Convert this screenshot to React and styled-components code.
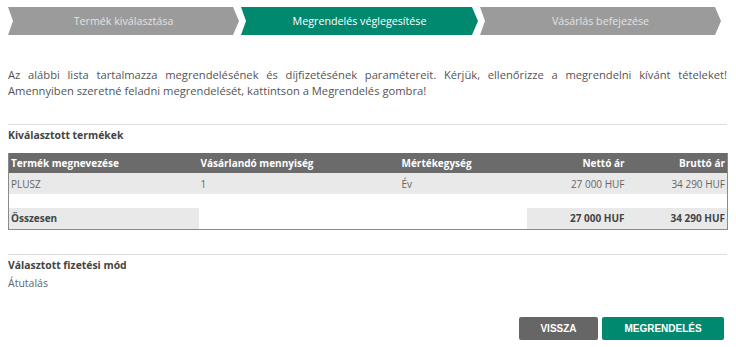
import React from "react";
import styled, { createGlobalStyle } from "styled-components";

const Global = createGlobalStyle`
  html, body { margin: 0; padding: 0; background: #fff; }
  body { font-family: "Open Sans", "Liberation Sans", sans-serif; color: #555; }
`;

const Page = styled.div`
  width: 719px;
  padding: 7px 0 0 8px;
`;

const Steps = styled.div`
  display: flex;
  gap: 2px;
  height: 28px;
`;

const Step = styled.div`
  flex: 0 0 ${(p) => p.$w}px;
  height: 28px;
  display: flex;
  align-items: center;
  justify-content: center;
  font-size: 10.7px;
  background: ${(p) => (p.$active ? "#00896f" : "#9b9b9b")};
  color: ${(p) => (p.$active ? "#ffffff" : "#e2e2e2")};
  clip-path: polygon(0 0, calc(100% - 6px) 0, 100% 50%, calc(100% - 6px) 100%, 0 100%, 5px 50%);
`;

const Intro = styled.p`
  margin: 32px 0 0;
  font-size: 11.2px;
  line-height: 16px;
  text-align: justify;
  color: #555;
`;

const Rule = styled.hr`
  border: 0;
  border-top: 1px solid #dddddd;
  margin: ${(p) => p.$mt}px 0 0;
`;

const SectionTitle = styled.div`
  font-weight: 700;
  font-size: 10.4px;
  line-height: 16px;
  color: #444;
  margin-top: 2px;
`;

const Table = styled.table`
  margin-top: 10px;
  width: 719px;
  border-collapse: collapse;
  border-left: 1px solid #8a8a8a;
  border-right: 1px solid #8a8a8a;
  border-bottom: 1px solid #8a8a8a;
  font-size: 10px;
  table-layout: fixed;
`;

const Th = styled.th`
  box-sizing: border-box;
  background: #6b6b6b;
  color: #fff;
  font-weight: 700;
  height: 20px;
  padding: 0 2px;
  text-align: ${(p) => p.$align || "left"};
  width: ${(p) => p.$w}px;
`;

const Td = styled.td`
  box-sizing: border-box;
  background: ${(p) => (p.$fill ? "#e9e9e9" : "#fff")};
  color: ${(p) => (p.$bold ? "#444" : "#666")};
  font-weight: ${(p) => (p.$bold ? 700 : 400)};
  height: ${(p) => p.$h || 21}px;
  padding: 0 2px;
  text-align: ${(p) => p.$align || "left"};
`;

const Payment = styled.div`
  font-size: 10.5px;
  line-height: 16px;
  color: #666;
  margin-top: 2px;
`;

const Actions = styled.div`
  display: flex;
  justify-content: flex-end;
  gap: 4px;
  margin-top: 26px;
  padding-right: 3px;
`;

const Button = styled.button`
  height: 23px;
  width: ${(p) => p.$w}px;
  border: 0;
  border-radius: 2px;
  background: ${(p) => (p.$primary ? "#00896f" : "#666666")};
  color: #fff;
  font-family: "Liberation Sans", Arial, sans-serif;
  font-weight: 700;
  font-size: 10px;
  padding: 0;
`;

export default function App() {
  return (
    <>
      <Global />
      <Page>
        <Steps>
          <Step $w={231}>Termék kiválasztása</Step>
          <Step $w={237} $active>Megrendelés véglegesítése</Step>
          <Step $w={241}>Vásárlás befejezése</Step>
        </Steps>
        <Intro>
          Az alábbi lista tartalmazza megrendelésének és díjfizetésének paramétereit. Kérjük, ellenőrizze a megrendelni kívánt tételeket! Amennyiben szeretné feladni megrendelését, kattintson a Megrendelés gombra!
        </Intro>
        <Rule $mt={25} />
        <SectionTitle>Kiválasztott termékek</SectionTitle>
        <Table>
          <thead>
            <tr>
              <Th $w={190}>Termék megnevezése</Th>
              <Th $w={201}>Vásárlandó mennyiség</Th>
              <Th $w={127}>Mértékegység</Th>
              <Th $w={100} $align="right">Nettó ár</Th>
              <Th $w={101} $align="right">Bruttó ár</Th>
            </tr>
          </thead>
          <tbody>
            <tr>
              <Td $fill>PLUSZ</Td>
              <Td $fill>1</Td>
              <Td $fill>Év</Td>
              <Td $fill $align="right">27 000 HUF</Td>
              <Td $fill $align="right">34 290 HUF</Td>
            </tr>
            <tr>
              <Td $h={14} colSpan={5}></Td>
            </tr>
            <tr>
              <Td $fill $bold>Összesen</Td>
              <Td colSpan={2}></Td>
              <Td $fill $bold $align="right">27 000 HUF</Td>
              <Td $fill $bold $align="right">34 290 HUF</Td>
            </tr>
          </tbody>
        </Table>
        <Rule $mt={24} />
        <SectionTitle>Választott fizetési mód</SectionTitle>
        <Payment>Átutalás</Payment>
        <Actions>
          <Button $w={79}>VISSZA</Button>
          <Button $w={122} $primary>MEGRENDELÉS</Button>
        </Actions>
      </Page>
    </>
  );
}
